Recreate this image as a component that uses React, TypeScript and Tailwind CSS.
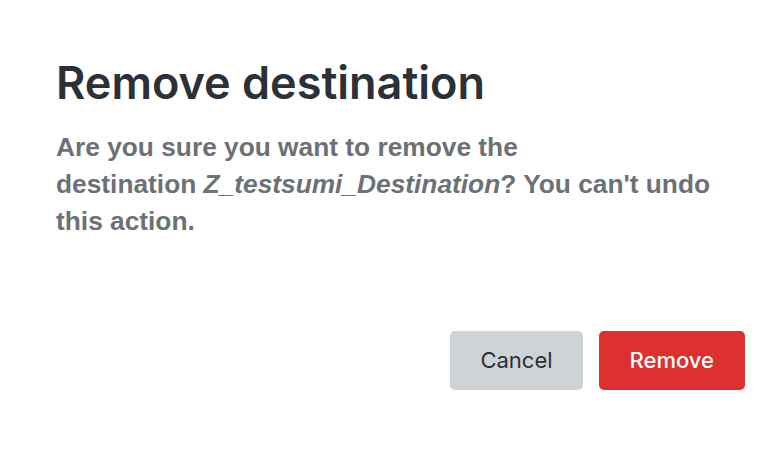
export default function App() {
  return (
    <div
      className="w-[769px] h-[458px] bg-white flex flex-col"
      style={{ fontFamily: 'Inter, "Noto Sans", sans-serif' }}
    >
      <div className="pl-[56px] pr-[24px] pt-[55px]">
        <h1 className="text-[45px] leading-[56px] font-semibold text-[#2b3137]">
          Remove destination
        </h1>
        <p
          className="mt-[18px] w-[690px] text-[26.3px] leading-[37px] font-bold text-[#6c7176]"
          style={{ fontFamily: '"Liberation Sans", Arial, sans-serif' }}
        >
          Are you sure you want to remove the{' '}
          <span className="whitespace-nowrap">
            destination <i>Z_testsumi_Destination</i>?
          </span>{' '}
          You can't undo this action.
        </p>
      </div>
      <div className="mt-auto mb-[68px] pr-[24px] flex justify-end gap-[16px]">
        <button className="h-[59px] px-[30px] rounded-[5px] bg-[#ced3d6] text-[#2b3137] text-[22px] font-normal">
          Cancel
        </button>
        <button className="h-[59px] px-[31px] rounded-[5px] bg-[#dc312e] text-white text-[22px] font-medium">
          Remove
        </button>
      </div>
    </div>
  );
}
